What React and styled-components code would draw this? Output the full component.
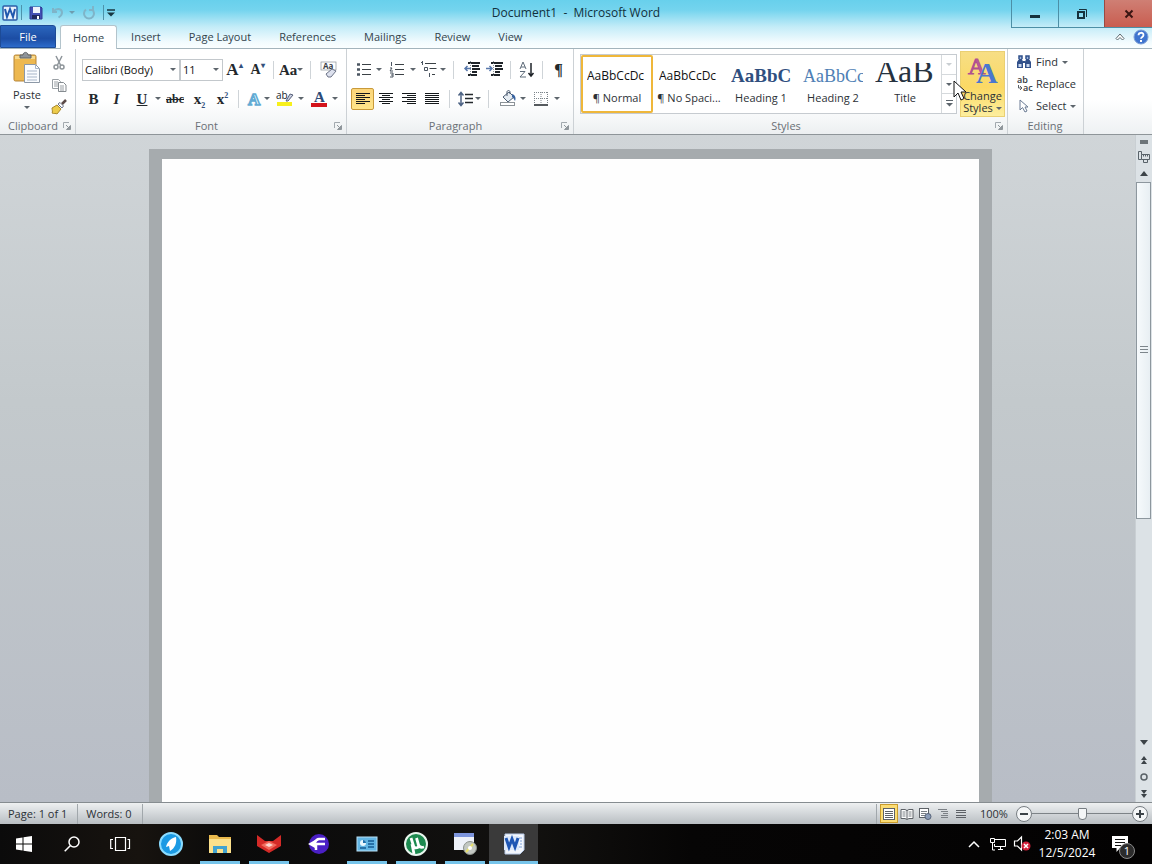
import React from 'react';
import styled, { createGlobalStyle, css } from 'styled-components';

const GlobalStyle = createGlobalStyle`
    * {
        box-sizing: border-box;
    }
    body {
        margin: 0;
        overflow: hidden;
    }
    button, select, input {
        font: inherit;
        color: inherit;
        margin: 0;
    }
    button {
        padding: 0;
        border: 0;
        background: none;
    }
    svg {
        display: block;
        flex: none;
        overflow: visible;
    }
`

const Window = styled.div`
    display: flex;
    flex-direction: column;
    height: 100vh;
    font-family: "Open Sans", "Noto Sans", sans-serif;
    font-size: 11px;
    line-height: 14px;
    color: #2c3136;
    white-space: nowrap;
`

/* ---------- header ---------- */

const Header = styled.header`
    display: grid;
    grid-template-columns: 1fr auto 1fr;
    grid-template-rows: 25px 23px;
    background: linear-gradient(#68d0ec 0, #74d4ee 10px, #c4ecf8 27px, #f2fbfe 42px, #fbfeff 48px);
    border-bottom: 1px solid #a3b4bc;
`

const QuickAccess = styled.div`
    display: flex;
    align-items: center;
    gap: 3px;
    padding-left: 2px;
`

const QuickButton = styled.button`
    display: flex;
    align-items: center;
    justify-content: center;
    width: ${props => props.$w || 16}px;
    height: 18px;
`

const BarLine = styled.span`
    width: 1px;
    height: 15px;
    background: #4d93ab;
`

const WindowTitle = styled.h1`
    margin: 0;
    font-size: 12px;
    font-weight: 400;
    line-height: 25px;
    color: #12303c;
    white-space: pre;
`

const WindowButtons = styled.div`
    justify-self: end;
    display: flex;
    height: 28px;
    border: 1px solid #4c8fa6;
    border-top: 0;
    border-right: 0;
`

const WindowButton = styled.button`
    display: flex;
    align-items: center;
    justify-content: center;
    width: 46px;
    border-left: 1px solid #4c8fa6;

    &:first-child {
        border-left: 0;
    }
    ${props => props.$close && css`
        width: 48px;
        background: linear-gradient(#cf7f74, #c95d50);
        border-left-color: #9a4a42;
    `}
`

const TabRow = styled.nav`
    grid-column: 1 / -1;
    display: flex;
    align-items: flex-start;
`

const Tab = styled.button`
    padding: 0 14px;
    height: 23px;
    color: #33444d;

    ${props => props.$file && css`
        width: 56px;
        margin-right: 4px;
        color: white;
        background: linear-gradient(#2b66bd, #1c4da4 60%, #2d6ccb);
        border: 1px solid #1d4b96;
        border-radius: 0 3px 0 0;
    `}
    ${props => props.$active && css`
        height: 24px;
        padding: 0 12px;
        background: white;
        border: 1px solid #b3c4cc;
        border-bottom: 0;
        border-radius: 3px 3px 0 0;
    `}
`

const TabTools = styled.div`
    display: flex;
    align-items: center;
    gap: 8px;
    height: 23px;
    margin-left: auto;
    padding-right: 3px;
`

/* ---------- ribbon ---------- */

const Ribbon = styled.div`
    display: flex;
    height: 86px;
    flex: none;
    background: linear-gradient(#ffffff 60%, #eef1f3);
    border-bottom: 1px solid #8e9599;
`

const GroupBox = styled.section`
    display: flex;
    flex-direction: column;
    width: ${props => props.$w}px;
    border-right: 1px solid #ccd1d5;
`

const GroupBody = styled.div`
    display: flex;
    flex: 1;
    min-height: 0;
    flex-direction: ${props => (props.$column ? 'column' : 'row')};
    padding: ${props => props.$pad || '0'};
`

const GroupCaption = styled.footer`
    display: flex;
    align-items: center;
    height: 16px;
    flex: none;
    padding: 0 4px 0 3px;
    color: #6a7076;
    background: linear-gradient(#f6f8f9, #eceff1);

    h2 {
        flex: 1;
        margin: 0;
        font-size: 11px;
        font-weight: 400;
        text-align: center;
    }
`

const ToolRow = styled.div`
    display: flex;
    align-items: center;
    height: 29px;
`

const Tool = styled.button`
    display: flex;
    align-items: center;
    justify-content: space-between;
    width: ${props => props.$w || 23}px;
    height: 22px;
    border: 1px solid transparent;
    border-radius: 2px;

    ${props => props.$on && css`
        background: linear-gradient(#fbd57a, #ffe58a);
        border-color: #c99a3a;
    `}
`

const Mark = styled.span`
    flex: 1;
    display: flex;
    align-items: center;
    justify-content: center;
`

const Glyph = styled.span`
    font-family: "Liberation Serif", serif;
    font-size: ${props => props.$size || 14}px;
    font-weight: 700;
    font-style: ${props => (props.$italic ? 'italic' : 'normal')};
    text-decoration: ${props => props.$line || 'none'};
    color: #23282c;

    sub, sup {
        font-size: 8px;
        line-height: 0;
        color: #33507c;
    }
`

const Caret = styled.span`
    flex: none;
    width: 0;
    height: 0;
    border: 3px solid transparent;
    border-top-color: ${props => props.$color || '#5d656c'};
    border-bottom: 0;
`

const ToolLine = styled.span`
    width: 1px;
    height: 18px;
    margin: 0 ${props => props.$gap || 4}px;
    background: #cfd4d8;
`

const Combo = styled.label`
    position: relative;
    display: block;
    width: ${props => props.$w}px;

    select {
        appearance: none;
        display: block;
        width: 100%;
        height: 22px;
        padding: 0 2px;
        border: 1px solid #c3c8cc;
        border-radius: 0;
        background: white;
        color: #111;
    }
    ${Caret} {
        position: absolute;
        right: 4px;
        top: 9px;
    }
    & + & select {
        border-left: 0;
    }
`

const PasteButton = styled.button`
    display: flex;
    flex-direction: column;
    align-items: center;
    gap: 4px;
    width: 46px;
    height: 62px;
`

const StackedTools = styled.div`
    display: flex;
    flex-direction: column;
`

const Gallery = styled.div`
    display: flex;
    height: 60px;
    margin-top: 5px;
    background: white;
    border: 1px solid #c6cbd0;
`

const StyleCell = styled.button`
    display: flex;
    flex-direction: column;
    align-items: center;
    width: 72px;
    height: 58px;
    padding: 6px 4px 0;
    border: 2px solid ${props => (props.$on ? '#efb73a' : 'transparent')};
    border-radius: 2px;
`

const Sample = styled.span`
    width: 60px;
    height: 28px;
    overflow: hidden;
    text-align: left;
    line-height: ${props => (props.$size > 24 ? 16 : 26)}px;
    color: ${props => props.$color || '#111'};
    font-family: ${props => (props.$serif ? '"Liberation Serif", serif' : '"Open Sans", sans-serif')};
    font-size: ${props => props.$size || 12}px;
    font-weight: ${props => (props.$bold ? 700 : 400)};
`

const GalleryScroll = styled.div`
    display: flex;
    flex-direction: column;
    width: 15px;
    border-left: 1px solid #d5d9dc;

    button {
        flex: 1;
        display: flex;
        align-items: center;
        justify-content: center;
        border-bottom: 1px solid #d5d9dc;
    }
    button:last-child {
        border-bottom: 0;
    }
`

const ChangeStyles = styled.div`
    position: relative;
    margin: 2px 0 0 3px;

    button {
        display: flex;
        flex-direction: column;
        align-items: center;
        width: 45px;
        height: 66px;
        padding-top: 2px;
        line-height: 12px;
        background: linear-gradient(#f7de85, #fbd964 55%, #fdee9e);
        border: 1px solid #ead073;
    }
    button svg {
        margin-bottom: 3px;
    }
    button span {
        display: flex;
        align-items: center;
        gap: 3px;
    }
    > svg {
        position: absolute;
        left: -7px;
        top: 29px;
    }
`

const EditButton = styled.button`
    display: flex;
    align-items: center;
    gap: 4px;
    height: 22px;
`

/* ---------- document area ---------- */

const Workspace = styled.main`
    display: flex;
    flex: 1;
    min-height: 0;
    background: linear-gradient(#d0d5d8, #c3c9cc 40%, #b8bdc6);
`

const Canvas = styled.div`
    flex: 1;
    display: flex;
    justify-content: center;
    padding: 14px 0 0 5px;
`

const Sheet = styled.div`
    flex: 0 1 843px;
    background: #fefefe;
    border: 13px solid #a6abae;
    border-top-width: 10px;
    border-bottom: 0;
`

const ScrollRail = styled.div`
    display: flex;
    flex-direction: column;
    align-items: center;
    width: 17px;
    background: #dce2e6;
    border-left: 1px solid #c9cfd3;
`

const RailButton = styled.button`
    display: flex;
    align-items: center;
    justify-content: center;
    width: 16px;
    height: ${props => props.$h || 17}px;
`

const Track = styled.div`
    flex: 1;
    align-self: stretch;
`

const Thumb = styled.div`
    display: flex;
    align-items: center;
    justify-content: center;
    height: 61%;
    margin-right: 1px;
    background: linear-gradient(90deg, #f6fafc, #e8eff3);
    border: 1px solid #8d979e;
`

/* ---------- status bar ---------- */

const StatusBar = styled.footer`
    display: flex;
    align-items: center;
    flex: none;
    height: 22px;
    background: linear-gradient(#eef0f1, #d3d7da 50%, #b9bec2);
    border-top: 1px solid #868c90;
`

const StatusItem = styled.button`
    height: 20px;
    padding: 0 10px 0 8px;
    border-right: 1px solid #a1a7ab;
`

const ViewTools = styled.div`
    display: flex;
    align-items: center;
    height: 20px;
    margin-left: auto;
    padding-left: 3px;
    border-left: 1px solid #a1a7ab;
`

const ViewButton = styled.button`
    display: flex;
    align-items: center;
    justify-content: center;
    width: 18px;
    height: 19px;
    border: 1px solid ${props => (props.$on ? '#c99b2c' : 'transparent')};
    background: ${props => (props.$on ? '#fbdc73' : 'none')};
`

const ZoomButton = styled.button`
    display: flex;
    align-items: center;
    justify-content: center;
    width: 16px;
    height: 16px;
    border: 1px solid #777d82;
    border-radius: 50%;
    background: #f4f6f7;
`

const ZoomRange = styled.input`
    appearance: none;
    width: 100px;
    height: 16px;
    background: linear-gradient(#7d8387, #7d8387) center / 100% 1px no-repeat;

    &::-webkit-slider-thumb {
        appearance: none;
        width: 9px;
        height: 12px;
        background: #f4f6f7;
        border: 1px solid #777d82;
        border-radius: 1px 1px 4px 4px;
    }
`

const ZoomArea = styled.div`
    display: flex;
    align-items: center;
    padding: 0 4px 0 10px;

    output {
        width: 36px;
    }
`

/* ---------- taskbar ---------- */

const Taskbar = styled.div`
    display: flex;
    flex: none;
    height: 40px;
    background: linear-gradient(90deg, #0b0b0b, #17130f 12%, #0a0a0a 20%, #12110f 46%, #060505 60%, #030202);
    color: white;
`

const AppList = styled.div`
    display: flex;
    padding-left: 2px;
`

const TaskButton = styled.button`
    display: flex;
    align-items: center;
    justify-content: center;
    width: ${props => (props.$system ? 48 : 49)}px;
    height: 40px;
    padding-top: 3px;
    border-bottom: 3px solid transparent;

    ${props => props.$running && css`
        background: linear-gradient(#76c4ea, #76c4ea) center bottom / ${props.$on ? '100%' : '40px'} 3px no-repeat border-box,
            ${props.$on ? '#3a3a3a' : 'none'};
    `}
`

const Tray = styled.div`
    display: flex;
    align-items: center;
    margin-left: auto;
    padding-right: 20px;

    button {
        display: flex;
        align-items: center;
        justify-content: center;
        width: 24px;
        height: 40px;
    }
`

const Clock = styled.time`
    width: 66px;
    margin-right: 8px;
    text-align: center;
    font-size: 12px;
    line-height: 18px;
`

const Notice = styled.span`
    position: relative;

    b {
        position: absolute;
        left: 7px;
        top: 7px;
        width: 16px;
        height: 16px;
        border: 1px solid #8b8b8b;
        border-radius: 50%;
        background: #2b2b2b;
        font-size: 11px;
        font-weight: 400;
        line-height: 14px;
        text-align: center;
    }
`

/* ---------- icons ---------- */

const Svg = ({ w = 16, h = w, children }) => (
    <svg width={w} height={h} viewBox={`0 0 ${w} ${h}`} fill="none" aria-hidden="true">{children}</svg>
);

const WordLogo = () => (
    <Svg>
        <rect x="1" y="1" width="14" height="14" rx="1" fill="#e9f1fb" stroke="#2d5fa8" strokeWidth="1.5" />
        <path d="M3 4l2 8 3-8 3 8 2-8" stroke="#1f57ad" strokeWidth="2" />
    </Svg>
);

const SaveIcon = () => (
    <Svg>
        <path d="M2 2h11l1 1v11H2z" fill="#4450b4" stroke="#2f3a92" />
        <rect x="5" y="2" width="7" height="6" fill="#eef2fb" />
        <rect x="4" y="10" width="8" height="4" fill="#20285f" />
        <rect x="9" y="11" width="2" height="3" fill="#fff" />
    </Svg>
);

const UndoIcon = () => (
    <Svg>
        <path d="M3 3v4h4M3.500 6.500C6 3 12 3 12 7.500c0 3-2 4-3.500 5" stroke="#7fb4c8" strokeWidth="2" />
    </Svg>
);

const RedoIcon = () => (
    <Svg>
        <path d="M5 4.500a5 5 0 1 0 6 0M8 5h4V1" stroke="#7fb4c8" strokeWidth="2" />
    </Svg>
);

const QatMenuIcon = () => (
    <Svg w={8} h={8}>
        <path d="M0 1h8" stroke="#173640" strokeWidth="1.500" />
        <path d="M0 3.500h8L4 7.500z" fill="#173640" />
    </Svg>
);

const MoreIcon = () => (
    <Svg w={7} h={7}>
        <path d="M0 .5h7" stroke="#5d656c" />
        <path d="M0 3h7L3.500 6.500z" fill="#5d656c" />
    </Svg>
);

const HelpIcon = () => (
    <Svg>
        <circle cx="8" cy="8" r="7" fill="#3f74cf" stroke="#7d9fd6" />
        <path d="M5.500 6.200c0-3.200 5-3.200 5-.2 0 2-2.500 1.800-2.500 3.800" stroke="#fff" strokeWidth="1.800" />
        <rect x="7" y="11" width="2" height="2" fill="#fff" />
    </Svg>
);

const LauncherIcon = () => (
    <Svg w={8}>
        <path d="M.5 6V.5H6" stroke="#a2a9ae" />
        <path d="M3 3l3 3" stroke="#8f969b" />
        <path d="M7.500 3.500v4h-4z" stroke="#8f969b" fill="#8f969b" />
    </Svg>
);

const PasteIcon = () => (
    <Svg w={28} h={32}>
        <rect x="1" y="3" width="22" height="26" rx="1.500" fill="#edb850" stroke="#b5853a" />
        <path d="M2 4h20v3H2z" fill="#f8d98c" />
        <path d="M7 6V3h3c0-3.500 5-3.500 5 0h3v3z" fill="#8f9499" stroke="#5f6469" />
        <path d="M11.500 12.500h11l4 4v14h-15z" fill="#fafcff" stroke="#8c98a6" />
        <path d="M22.500 12.500v4h4M14 19h10M14 22h10M14 25h10M14 28h10" stroke="#a7b5c8" />
    </Svg>
);

const CutIcon = () => (
    <Svg>
        <path d="M5 1l4.500 9M11 1L6.500 10" stroke="#8e959a" strokeWidth="1.500" />
        <circle cx="5" cy="12" r="2" stroke="#8e959a" strokeWidth="1.500" />
        <circle cx="11" cy="12" r="2" stroke="#8e959a" strokeWidth="1.500" />
    </Svg>
);

const CopyIcon = () => (
    <Svg>
        <path d="M1.500 2.500h6l2 2v7h-8z" fill="#fff" stroke="#9aa0a5" />
        <path d="M3 5h4M3 7h4M3 9h4" stroke="#9aa0a5" />
        <path d="M7.500 5.500h5l2.500 2.500v6.500H7.500z" fill="#fff" stroke="#858b90" />
        <path d="M9 9h4M9 11h4M9 13h4" stroke="#9aa0a5" />
    </Svg>
);

const BrushIcon = () => (
    <Svg>
        <path d="M1 9l5-3 4 4-4 5c-1-1-3 0-5-1 1-1 0-3 0-5z" fill="#eccb4a" stroke="#a8872b" />
        <path d="M7 5l4 4 1.500-2L9 3.500z" fill="#fff" stroke="#6d7387" />
        <path d="M11 5l4-4" stroke="#5b4a48" strokeWidth="2.500" />
    </Svg>
);

const ClearIcon = () => (
    <Svg w={18}>
        <rect x="1" y="1" width="15" height="8" stroke="#8b9298" strokeWidth=".7" />
        <text x="3" y="8" fontSize="8" fontWeight="700" fill="#3a4148">Aa</text>
        <path d="M6 13l6-5 4 2-5 6H8z" fill="#dde1ee" stroke="#6c7387" />
    </Svg>
);

const OutlineA = () => (
    <Svg>
        <text x="2" y="14" fontFamily="Liberation Serif" fontWeight="700" fontSize="17" fill="#eefaff" stroke="#62abd4" strokeWidth="1.500">A</text>
    </Svg>
);

const HighlightIcon = () => (
    <Svg w={18}>
        <rect x="1" y="12" width="15" height="4" fill="#f7f01c" />
        <text x="0" y="9" fontSize="10" fill="#20252a">ab</text>
        <path d="M10 11l4-7 3 1-5 6z" fill="#c9cfe0" stroke="#58607a" />
    </Svg>
);

const FontColorIcon = () => (
    <Svg>
        <rect x="0" y="12" width="16" height="4" fill="#d4141c" />
        <text x="3" y="11" fontFamily="Liberation Serif" fontWeight="700" fontSize="15" fill="#2c4b78">A</text>
    </Svg>
);

const BulletsIcon = () => (
    <Svg>
        <path d="M1 2.500h3M1 7.500h3M1 12.500h3" stroke="#4b5561" strokeWidth="2.500" />
        <path d="M6 2.500h9M6 7.500h9M6 12.500h9" stroke="#3b4146" />
    </Svg>
);

const NumbersIcon = () => (
    <Svg>
        <path d="M2.500 0v4M1 6h2l-2 3h3M1 11h3v4H1M2 13h2" stroke="#4b5561" />
        <path d="M6 2.500h9M6 7.500h9M6 12.500h9" stroke="#3b4146" />
    </Svg>
);

const MultiIcon = () => (
    <Svg w={18}>
        <path d="M2.500 0v4M4.500 6.500h3v3h-3zM9.500 12v4M1 1.500h2" stroke="#4b5561" />
        <path d="M5 2.500h11M9.500 7.500h7M12 13.500h3" stroke="#3b4146" />
    </Svg>
);

const IndentIcon = ({ out }) => (
    <Svg w={17}>
        <path d="M5 2h12M9 5h7M9 8h8M9 11h5M5 14h9" stroke="#1e2328" strokeWidth="2" />
        <path d={out ? 'M8 7.500H2M4.500 5L2 7.500 4.500 10' : 'M0 7.500h6M3.500 5L6 7.500 3.500 10'} stroke="#5878ab" strokeWidth="1.500" />
        <path d="M7.500 0v16" stroke="#8b949b" strokeDasharray="1 1" />
    </Svg>
);

const SortIcon = () => (
    <Svg>
        <path d="M1 7l3-7 3 7M2 5h4M1 9.500h5L1 15h6" stroke="#5f6c7a" />
        <path d="M12 1v13M9.500 11l2.500 3 2.500-3" stroke="#1e2328" strokeWidth="1.500" />
    </Svg>
);

const alignLines = {
    left: 'M1 2.500h14M1 4.500h9M1 6.500h14M1 8.500h9M1 10.500h14M1 12.500h9',
    center: 'M1 2.500h14M4 4.500h8M1 6.500h14M4 8.500h8M1 10.500h14M4 12.500h8',
    right: 'M1 2.500h14M6 4.500h9M1 6.500h14M6 8.500h9M1 10.500h14M6 12.500h9',
    justify: 'M1 2.500h14M1 4.500h14M1 6.500h14M1 8.500h14M1 10.500h14M1 12.500h14',
};

const AlignIcon = ({ kind }) => (
    <Svg><path d={alignLines[kind]} stroke="#14181b" /></Svg>
);

const SpacingIcon = () => (
    <Svg>
        <path d="M3 2v12M.5 4.500L3 1.500l2.500 3M.5 11.500L3 14.500l2.500-3" stroke="#4d6384" strokeWidth="1.500" />
        <path d="M7 3.500h8M7 7.500h8M7 11.500h8" stroke="#23282c" strokeWidth="1.500" />
    </Svg>
);

const BucketIcon = () => (
    <Svg w={17}>
        <path d="M3 7l6-5 5 5-6 5z" fill="#e6ecf2" stroke="#4a5b70" />
        <path d="M7 6V2c0-2 3-2 3 0v2" stroke="#4a5b70" />
        <path d="M12 4c4 1 4 5 3 7-1-1-1-3-3-4z" fill="#39639f" />
        <rect x=".5" y="12.500" width="14" height="3" fill="#fff" stroke="#8c9398" />
    </Svg>
);

const BordersIcon = () => (
    <Svg>
        <path d="M1.500 1v12M14.500 1v12M8 1v12M1 1.500h14M1 7.500h14" stroke="#7c848a" strokeDasharray="1 1" />
        <path d="M1 14h14" stroke="#1e2328" strokeWidth="1.500" />
    </Svg>
);

const BigAAIcon = () => (
    <Svg w={34} h={33}>
        <text x="2" y="20" fontFamily="Liberation Serif" fontSize="24" fill="#c05a9c" stroke="#b0508f">A</text>
        <text x="10" y="29" fontFamily="Liberation Serif" fontWeight="700" fontSize="30" fill="#4b77cf">A</text>
    </Svg>
);

const CursorIcon = () => (
    <Svg w={14} h={22}>
        <path d="M1 1v16l4-4 3 7 3-1.500-3-6.500h5z" fill="#fff" stroke="#111" />
    </Svg>
);

const BinocularsIcon = () => (
    <Svg>
        <path d="M3 5V2h3v3M10 5V2h3v3" stroke="#31508a" strokeWidth="1.500" fill="#9db5dd" />
        <path d="M1 14V8l2-3h3l1 3v6zM9 14V8l1-3h3l2 3v6z" fill="#31508a" />
        <path d="M2.500 10h3v3h-3zM10.500 10h3v3h-3z" fill="#c9d8f0" />
        <path d="M6.500 8h3" stroke="#31508a" strokeWidth="2" />
    </Svg>
);

const ReplaceIcon = () => (
    <Svg>
        <text x="1" y="7" fontSize="9" fontWeight="600" fill="#33383d">ab</text>
        <text x="7" y="15" fontSize="9" fontWeight="600" fill="#33383d">ac</text>
        <path d="M2.500 9v3h3M4 10l2 2-2 2" stroke="#5a6167" />
    </Svg>
);

const SelectIcon = () => (
    <Svg>
        <path d="M4 2v10l2.500-2.500L9 14l2-1-2-4h3z" fill="#fff" stroke="#6a7b94" />
    </Svg>
);

const RulerIcon = () => (
    <Svg w={12}>
        <path d="M3.500 3.500h8v5h-8zM.5 .5h3v3M.5 .5v8h3M5.500 8.500v3h4v-3M5.500 3.500v2M7.500 3.500v2M9.500 3.500v2" stroke="#59636a" />
    </Svg>
);

const PageView = () => (
    <Svg w={14}>
        <rect x="1.500" y="1.500" width="11" height="11" fill="#fff" stroke="#5d6166" />
        <path d="M3 4.500h8M3 6.500h8M3 8.500h8M3 10.500h8" stroke="#5d6166" />
    </Svg>
);

const ReadingView = () => (
    <Svg w={14}>
        <path d="M1 2.500h4l2 1 2-1h4v9H9l-2 1-2-1H1zM7 3v9" fill="#fff" stroke="#5d6166" />
        <path d="M2.500 5h3M2.500 7h3M2.500 9h3M8.500 5h3M8.500 7h3M8.500 9h3" stroke="#7b8085" />
    </Svg>
);

const WebView = () => (
    <Svg w={14}>
        <rect x="1.500" y="1.500" width="9" height="9" fill="#fff" stroke="#5d6166" />
        <path d="M3 4.500h6M3 6.500h5M3 8.500h4" stroke="#7b8085" />
        <circle cx="10" cy="9.500" r="3" fill="#8c9db8" stroke="#566378" />
    </Svg>
);

const OutlineView = () => (
    <Svg w={14}><path d="M2 2.500h9M5 4.500h7M7 6.500h5M5 8.500h7M5 10.500h7" stroke="#7b8085" /></Svg>
);

const DraftView = () => (
    <Svg w={14}><path d="M2 3.500h10M2 5.500h10M2 8.500h10M2 10.500h10" stroke="#5d6166" /></Svg>
);

const StartIcon = () => (
    <Svg>
        <path d="M0 2.500l6.500-1v6H0zM7.500 1.300L16 0v7.500H7.500zM0 8.500h6.500v6L0 13.500zM7.500 8.500H16V16l-8.500-1.300z" fill="#fff" />
    </Svg>
);

const SearchIcon = () => (
    <Svg>
        <circle cx="10" cy="6" r="5" stroke="#fff" strokeWidth="1.500" />
        <path d="M6.500 9.500L.7 15.300" stroke="#fff" strokeWidth="1.500" />
    </Svg>
);

const TaskViewIcon = () => (
    <Svg w={20} h={16}>
        <path d="M5.500 1.500h10v13h-10zM3 3.500H.7v9H3M17.500 3.500h2v9h-2" stroke="#fff" strokeWidth="1.200" />
    </Svg>
);

const BlueAppIcon = () => (
    <Svg w={24}>
        <circle cx="12" cy="12" r="11" fill="#1b9ae4" stroke="#8bdcff" strokeWidth="2" />
        <path d="M17 5c-5 1-9 5-10 10l3-1 1 5c5-3 7-8 6-14z" fill="#fff" />
    </Svg>
);

const FolderIcon = () => (
    <Svg w={22} h={20}>
        <path d="M0 1h8l2 2h12v16H0z" fill="#e9b94d" />
        <path d="M0 5h22v14H0z" fill="#fbe08b" />
        <path d="M4 19v-7h14v7h-4v-4H8v4z" fill="#40a2d0" />
    </Svg>
);

const RedAppIcon = () => (
    <Svg w={26} h={20}>
        <path d="M1 1l8 6h8l8-6v11l-12 7L1 12z" fill="#d42a27" />
        <path d="M5 11l8-4 8 4-8 5z" fill="#f26b5d" />
        <path d="M9 11l4-2 4 2-4 2z" fill="#fbd5cf" />
    </Svg>
);

const PurpleAppIcon = () => (
    <Svg w={24}>
        <circle cx="13" cy="12" r="10" fill="#4a1fc4" />
        <path d="M19 7h-6c-3 0-4 3-5 5h11M10 12v6" stroke="#fff" strokeWidth="2.500" />
        <path d="M2 12l7-4v8z" fill="#fff" />
    </Svg>
);

const PanelAppIcon = () => (
    <Svg w={22} h={18}>
        <rect x="1" y="2" width="20" height="14" fill="#62b5e4" stroke="#b9e1f6" />
        <circle cx="7" cy="8" r="3" fill="#e8f6fd" />
        <path d="M7 8V5a3 3 0 0 1 3 3z" fill="#1d70ae" />
        <path d="M12 6h6M12 9h6M12 12h6M4 13h6" stroke="#165b93" strokeWidth="1.500" />
    </Svg>
);

const TorrentIcon = () => (
    <Svg w={24}>
        <circle cx="12" cy="12" r="11" fill="#1c8a4f" stroke="#e9f6ee" strokeWidth="2" />
        <path d="M7 6l2.500 8c1 3 6 2 5-1L12.500 6M14 12c1 3 3 4 6 3M8 12l2 10" stroke="#fff" strokeWidth="2.800" />
    </Svg>
);

const DiscAppIcon = () => (
    <Svg w={24}>
        <rect x="1" y="1" width="20" height="17" fill="#eef1f8" />
        <rect x="1" y="1" width="20" height="4" fill="#7d95dc" />
        <circle cx="17" cy="16" r="6.500" fill="#c3c8c2" stroke="#8c928c" />
        <path d="M13 20l7-8" stroke="#e8e06a" strokeWidth="2" />
        <circle cx="17" cy="16" r="2" fill="#fff" />
    </Svg>
);

const WordAppIcon = () => (
    <Svg w={22}>
        <path d="M2 1h19v16l-4 4H2z" fill="#f3f7fd" stroke="#b9cbe8" />
        <path d="M16 5h3M17 8h2M17 11h2M15 14h4" stroke="#7fa2dc" />
        <rect x="1" y="3" width="15" height="14" fill="#dce8fa" />
        <path d="M3 5l3 9 3-8 3 8 3-9" stroke="#1e56b4" strokeWidth="3" />
    </Svg>
);

const ChevronUp = ({ color = '#fff' }) => (
    <Svg w={14}><path d="M2 10l5-5 5 5" stroke={color} strokeWidth="1.500" /></Svg>
);

const NetworkIcon = () => (
    <Svg>
        <path d="M5 3.500h10.500v7H4.500V8M8 13.500h5M10.500 11v2.500M.5 2.500h4v4h-4zM2.500 6.500V14H5" stroke="#fff" />
    </Svg>
);

const MutedIcon = () => (
    <Svg w={18}>
        <path d="M1.500 6v5h3l4 4V2l-4 4z" stroke="#fff" strokeWidth="1.200" />
        <circle cx="13" cy="11" r="4.500" fill="#d3203a" />
        <path d="M11 9l4 4M15 9l-4 4" stroke="#fff" strokeWidth="1.500" />
    </Svg>
);

const NoticeIcon = () => (
    <Svg>
        <path d="M0 0h16v12H8l-3.500 4v-4H0z" fill="#fff" />
        <path d="M3 3.500h10M3 6.500h10M3 9.500h6" stroke="#111" />
    </Svg>
);

/* ---------- parts ---------- */

const Group = ({ title, width, pad, column, launcher = true, children }) => (
    <GroupBox $w={width} aria-label={title}>
        <GroupBody $pad={pad} $column={column}>{children}</GroupBody>
        <GroupCaption>
            <h2>{title}</h2>
            {launcher && <button aria-label={`${title} options`}><LauncherIcon /></button>}
        </GroupCaption>
    </GroupBox>
);

const ToolButton = ({ label, w, on, menu, children }) => (
    <Tool $w={w} $on={on} aria-label={label} aria-pressed={on}>
        <Mark>{children}</Mark>
        {menu && <Caret />}
    </Tool>
);

const tabs = ['Insert', 'Page Layout', 'References', 'Mailings', 'Review', 'View'];

const gallery = [
    { name: '¶ Normal', sample: 'AaBbCcDc', on: true },
    { name: '¶ No Spaci...', sample: 'AaBbCcDc' },
    { name: 'Heading 1', sample: 'AaBbCc', serif: true, bold: true, size: 19, color: '#2f4f7f' },
    { name: 'Heading 2', sample: 'AaBbCc', serif: true, size: 18, color: '#4f7fb5' },
    { name: 'Title', sample: 'AaB', serif: true, size: 32, color: '#26323f' },
];

const views = [
    ['Print Layout', PageView],
    ['Full Screen Reading', ReadingView],
    ['Web Layout', WebView],
    ['Outline', OutlineView],
    ['Draft', DraftView],
];

const apps = [
    { name: 'Browser', icon: BlueAppIcon },
    { name: 'File Explorer', icon: FolderIcon, running: true },
    { name: 'Archive tool', icon: RedAppIcon, running: true },
    { name: 'Fusion', icon: PurpleAppIcon },
    { name: 'Control Panel', icon: PanelAppIcon, running: true },
    { name: 'Torrent', icon: TorrentIcon, running: true },
    { name: 'Disc image', icon: DiscAppIcon, running: true },
    { name: 'Word', icon: WordAppIcon, running: true, on: true },
];

const TitleArea = () => (
    <Header>
        <QuickAccess>
            <WordLogo />
            <BarLine />
            <QuickButton $w={22} aria-label="Save"><SaveIcon /></QuickButton>
            <QuickButton aria-label="Undo"><UndoIcon /></QuickButton>
            <QuickButton $w={6} aria-label="Undo list"><Caret $color="#6d9db0" /></QuickButton>
            <QuickButton $w={22} aria-label="Repeat"><RedoIcon /></QuickButton>
            <BarLine />
            <QuickButton $w={8} aria-label="Customize toolbar"><QatMenuIcon /></QuickButton>
        </QuickAccess>
        <WindowTitle>Document1  -  Microsoft Word</WindowTitle>
        <WindowButtons>
            <WindowButton aria-label="Minimize"><Svg w={12}><path d="M1 8.500h10" stroke="#16323d" strokeWidth="3" /></Svg></WindowButton>
            <WindowButton aria-label="Restore">
                <Svg w={12}><path d="M2 4h6v6H2z" stroke="#16323d" strokeWidth="2" /><path d="M3 1.500h7.500V9" stroke="#16323d" /></Svg>
            </WindowButton>
            <WindowButton $close aria-label="Close"><Svg w={10}><path d="M1.500 1.500l7 7M8.500 1.500l-7 7" stroke="#3a1512" strokeWidth="2" /></Svg></WindowButton>
        </WindowButtons>
        <TabRow>
            <Tab $file>File</Tab>
            <Tab $active>Home</Tab>
            {tabs.map(tab => <Tab key={tab}>{tab}</Tab>)}
            <TabTools>
                <button aria-label="Minimize ribbon">
                    <Svg w={10}><path d="M1 6.500L5 2l4 4.500-1.500 1.500L5 5.500 2.500 8z" fill="#fff" stroke="#5a6970" /></Svg>
                </button>
                <button aria-label="Help"><HelpIcon /></button>
            </TabTools>
        </TabRow>
    </Header>
);

const RibbonArea = () => (
    <Ribbon>
        <Group title="Clipboard" width={76} pad="3px 0 0 4px">
            <PasteButton>
                <PasteIcon />
                <span>Paste</span>
                <Caret />
            </PasteButton>
            <StackedTools>
                <ToolButton label="Cut" w={18}><CutIcon /></ToolButton>
                <ToolButton label="Copy" w={18}><CopyIcon /></ToolButton>
                <ToolButton label="Format Painter" w={18}><BrushIcon /></ToolButton>
            </StackedTools>
        </Group>

        <Group title="Font" width={271} pad="6px 0 0 6px" column>
            <ToolRow>
                <Combo $w={98}>
                    <select aria-label="Font"><option>Calibri (Body)</option></select>
                    <Caret />
                </Combo>
                <Combo $w={43}>
                    <select aria-label="Font size"><option>11</option></select>
                    <Caret />
                </Combo>
                <ToolButton label="Grow Font"><Glyph $size={17}>A<sup>▴</sup></Glyph></ToolButton>
                <ToolButton label="Shrink Font"><Glyph $size={14}>A<sup>▾</sup></Glyph></ToolButton>
                <ToolLine />
                <ToolButton label="Change Case" w={26} menu><Glyph $size={15}>Aa</Glyph></ToolButton>
                <ToolLine $gap={6} />
                <ToolButton label="Clear Formatting"><ClearIcon /></ToolButton>
            </ToolRow>
            <ToolRow>
                <ToolButton label="Bold"><Glyph $size={15}>B</Glyph></ToolButton>
                <ToolButton label="Italic"><Glyph $size={15} $italic>I</Glyph></ToolButton>
                <ToolButton label="Underline" w={34} menu><Glyph $size={15} $line="underline">U</Glyph></ToolButton>
                <ToolButton label="Strikethrough" w={26}><Glyph $size={12} $line="line-through">abc</Glyph></ToolButton>
                <ToolButton label="Subscript"><Glyph $size={15}>x<sub>2</sub></Glyph></ToolButton>
                <ToolButton label="Superscript"><Glyph $size={15}>x<sup>2</sup></Glyph></ToolButton>
                <ToolLine />
                <ToolButton label="Text Effects" w={28} menu><OutlineA /></ToolButton>
                <ToolButton label="Text Highlight Color" w={34} menu><HighlightIcon /></ToolButton>
                <ToolButton label="Font Color" w={34} menu><FontColorIcon /></ToolButton>
            </ToolRow>
        </Group>

        <Group title="Paragraph" width={227} pad="6px 0 0 4px" column>
            <ToolRow>
                <ToolButton label="Bullets" w={32} menu><BulletsIcon /></ToolButton>
                <ToolButton label="Numbering" w={34} menu><NumbersIcon /></ToolButton>
                <ToolButton label="Multilevel List" w={30} menu><MultiIcon /></ToolButton>
                <ToolLine $gap={6} />
                <ToolButton label="Decrease Indent"><IndentIcon out /></ToolButton>
                <ToolButton label="Increase Indent"><IndentIcon /></ToolButton>
                <ToolLine />
                <ToolButton label="Sort"><SortIcon /></ToolButton>
                <ToolLine />
                <ToolButton label="Show marks"><Glyph $size={16}>¶</Glyph></ToolButton>
            </ToolRow>
            <ToolRow>
                <ToolButton label="Align Left" on><AlignIcon kind="left" /></ToolButton>
                <ToolButton label="Center"><AlignIcon kind="center" /></ToolButton>
                <ToolButton label="Align Right"><AlignIcon kind="right" /></ToolButton>
                <ToolButton label="Justify"><AlignIcon kind="justify" /></ToolButton>
                <ToolLine $gap={6} />
                <ToolButton label="Line Spacing" w={26} menu><SpacingIcon /></ToolButton>
                <ToolLine $gap={6} />
                <ToolButton label="Shading" w={32} menu><BucketIcon /></ToolButton>
                <ToolButton label="Borders" w={34} menu><BordersIcon /></ToolButton>
            </ToolRow>
        </Group>

        <Group title="Styles" width={434} pad="0 0 0 6px">
            <Gallery>
                {gallery.map(item => (
                    <StyleCell key={item.name} $on={item.on}>
                        <Sample $serif={item.serif} $bold={item.bold} $size={item.size} $color={item.color}>{item.sample}</Sample>
                        <span>{item.name}</span>
                    </StyleCell>
                ))}
                <GalleryScroll>
                    <button aria-label="Scroll up"><Caret $color="#c9ced2" /></button>
                    <button aria-label="Scroll down"><Caret /></button>
                    <button aria-label="More styles"><MoreIcon /></button>
                </GalleryScroll>
            </Gallery>
            <ChangeStyles>
                <button>
                    <BigAAIcon />
                    <span>Change</span>
                    <span>Styles <Caret /></span>
                </button>
                <CursorIcon />
            </ChangeStyles>
        </Group>

        <Group title="Editing" width={76} pad="2px 0 0 8px" column launcher={false}>
            <EditButton><BinocularsIcon />Find <Caret /></EditButton>
            <EditButton><ReplaceIcon />Replace</EditButton>
            <EditButton><SelectIcon />Select <Caret /></EditButton>
        </Group>
    </Ribbon>
);

const Rail = () => (
    <ScrollRail>
        <RailButton $h={14} aria-label="Split"><Svg w={8} h={4}><path d="M0 0h8v4H0z" fill="#6d757a" /></Svg></RailButton>
        <RailButton $h={16} aria-label="View Ruler"><RulerIcon /></RailButton>
        <RailButton aria-label="Line up"><Svg w={8} h={5}><path d="M0 5l4-5 4 5z" fill="#3c4348" /></Svg></RailButton>
        <Track>
            <Thumb><Svg w={8}><path d="M0 .5h8M0 3.500h8M0 6.500h8" stroke="#7d868c" /></Svg></Thumb>
        </Track>
        <RailButton aria-label="Line down"><Svg w={8} h={5}><path d="M0 0l4 5 4-5z" fill="#3c4348" /></Svg></RailButton>
        <RailButton aria-label="Previous Page"><Svg w={8}><path d="M1 4l3-4 3 4zM1 8l3-4 3 4z" fill="#3c4348" /></Svg></RailButton>
        <RailButton aria-label="Browse Object"><Svg w={8}><circle cx="4" cy="4" r="3" stroke="#5a6268" strokeWidth="1.500" /></Svg></RailButton>
        <RailButton aria-label="Next Page"><Svg w={8}><path d="M1 0l3 4 3-4zM1 4l3 4 3-4z" fill="#3c4348" /></Svg></RailButton>
    </ScrollRail>
);

const Status = () => (
    <StatusBar>
        <StatusItem>Page: 1 of 1</StatusItem>
        <StatusItem>Words: 0</StatusItem>
        <ViewTools>
            {views.map(([name, Icon], i) => (
                <ViewButton key={name} aria-label={name} $on={i === 0}><Icon /></ViewButton>
            ))}
        </ViewTools>
        <ZoomArea>
            <output htmlFor="zoom">100%</output>
            <ZoomButton aria-label="Zoom out"><Svg w={8}><path d="M0 4h8" stroke="#3c4348" strokeWidth="2" /></Svg></ZoomButton>
            <ZoomRange id="zoom" type="range" min="0" max="100" defaultValue="50" aria-label="Zoom" />
            <ZoomButton aria-label="Zoom in"><Svg w={8}><path d="M0 4h8M4 0v8" stroke="#3c4348" strokeWidth="2" /></Svg></ZoomButton>
        </ZoomArea>
    </StatusBar>
);

const SystemBar = () => (
    <Taskbar>
        <TaskButton $system aria-label="Start"><StartIcon /></TaskButton>
        <TaskButton $system aria-label="Search"><SearchIcon /></TaskButton>
        <TaskButton $system aria-label="Task View"><TaskViewIcon /></TaskButton>
        <AppList>
            {apps.map(({ name, icon: Icon, running, on }) => (
                <TaskButton key={name} aria-label={name} $running={running} $on={on}><Icon /></TaskButton>
            ))}
        </AppList>
        <Tray>
            <button aria-label="Show hidden icons"><ChevronUp /></button>
            <button aria-label="Network"><NetworkIcon /></button>
            <button aria-label="Volume muted"><MutedIcon /></button>
            <Clock>2:03 AM<br />12/5/2024</Clock>
            <button aria-label="Notifications">
                <Notice><NoticeIcon /><b>1</b></Notice>
            </button>
        </Tray>
    </Taskbar>
);

const App = () => {
    return (
        <Window>
            <GlobalStyle />
            <TitleArea />
            <RibbonArea />
            <Workspace>
                <Canvas><Sheet /></Canvas>
                <Rail />
            </Workspace>
            <Status />
            <SystemBar />
        </Window>
    );
};

export default App;
